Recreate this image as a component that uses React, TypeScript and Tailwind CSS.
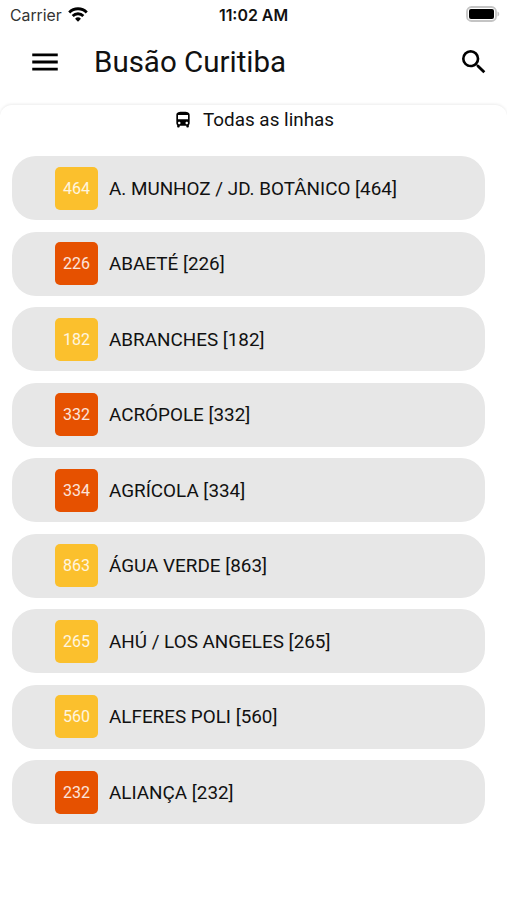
import React from 'react';

const lines = [
  { code: '464', name: 'A. MUNHOZ / JD. BOTÂNICO', express: false },
  { code: '226', name: 'ABAETÉ', express: true },
  { code: '182', name: 'ABRANCHES', express: false },
  { code: '332', name: 'ACRÓPOLE', express: true },
  { code: '334', name: 'AGRÍCOLA', express: true },
  { code: '863', name: 'ÁGUA VERDE', express: false },
  { code: '265', name: 'AHÚ / LOS ANGELES', express: false },
  { code: '560', name: 'ALFERES POLI', express: false },
  { code: '232', name: 'ALIANÇA', express: true },
];

function StatusBar() {
  return (
    <div className="grid h-[30px] grid-cols-3 items-center pr-[7px] pl-[10px] font-['Inter',sans-serif] text-[15.8px] text-[#111]">
      <div className="flex items-center gap-[6px]">
        <span className="pt-px text-[#333]">Carrier</span>
        <svg className="-mt-0.5" width="20" height="15" viewBox="0 0 21 15" fill="none" stroke="#000" strokeWidth="3">
          <path d="M1.300 5.300a13 13 0 0 1 18.400 0" />
          <path d="M4.900 9a8 8 0 0 1 11.200 0" />
          <path d="M10.500 15 7.400 11.900a4.400 4.400 0 0 1 6.200 0z" fill="#000" stroke="none" />
        </svg>
      </div>
      <span className="pt-px pr-[3px] text-center text-[15.9px] font-semibold whitespace-nowrap">11:02 AM</span>
      <svg className="-mt-[2px] justify-self-end" width="34" height="16" viewBox="0 0 34 16">
        <rect x="1" y="1" width="29" height="14" rx="4.500" fill="#fff" stroke="#c4c4c4" strokeWidth="1.800" />
        <rect x="3" y="3" width="25" height="10" rx="2" fill="#000" />
        <path d="M31.500 5.500c2.300.8 2.300 4.200 0 5z" fill="#c4c4c4" />
      </svg>
    </div>
  );
}

export default function App() {
  return (
    <div className="flex h-[900px] w-[507px] flex-col overflow-hidden bg-white font-['Roboto',sans-serif] text-[#111]">
      <StatusBar />
      <header className="flex h-[75px] shrink-0 items-center pr-[17px] pb-[12px] pl-[28px]">
        <svg width="34" height="34" viewBox="0 0 24 24"><path d="M3 18h18v-2H3v2zm0-5h18v-2H3v2zm0-7v2h18V6H3z" /></svg>
        <h1 className="ml-8 flex-1 text-[29.500px] leading-9">Busão Curitiba</h1>
        <svg width="32" height="32" viewBox="0 0 24 24"><path d="M15.500 14h-.79l-.28-.27A6.470 6.470 0 0 0 16 9.500 6.500 6.500 0 1 0 9.500 16c1.610 0 3.090-.59 4.230-1.570l.27.28v.79l5 4.990L20.490 19l-4.990-5zm-6 0C7.010 14 5 11.990 5 9.500S7.010 5 9.500 5 14 7.010 14 9.500 11.990 14 9.500 14z" /></svg>
      </header>
      <main className="flex-1 rounded-t-[12px] shadow-[0_-1px_3px_rgba(0,0,0,0.08)]">
        <div className="flex h-[51.200px] items-start justify-center gap-[10px] pt-[3px]">
          <svg className="mt-[2px]" width="20" height="20" viewBox="0 0 24 24"><path d="M4 16c0 .88.39 1.670 1 2.220V20c0 .55.45 1 1 1h1c.55 0 1-.45 1-1v-1h8v1c0 .55.45 1 1 1h1c.55 0 1-.45 1-1v-1.780c.61-.55 1-1.340 1-2.220V6c0-3.500-3.580-4-8-4s-8 .5-8 4v10zm3.500 1c-.83 0-1.500-.67-1.500-1.500S6.670 14 7.500 14s1.500.67 1.500 1.500S8.330 17 7.500 17zm9 0c-.83 0-1.500-.67-1.500-1.500s.67-1.500 1.500-1.500 1.500.67 1.500 1.500-.67 1.500-1.500 1.500zm1.500-6H6V6h12v5z" /></svg>
          <h2 className="text-[18.880px] leading-6">Todas as linhas</h2>
        </div>
        <ul className="ml-3 flex w-[473px] flex-col gap-[11.200px]">
          {lines.map((line) => (
            <li key={line.code} className="flex h-[64.300px] items-center rounded-[24px] bg-[#e7e7e7] pl-[43px]">
              <span className={`flex size-[43px] items-center justify-center rounded-[5px] pt-px text-[16px] text-white/85 ${line.express ? 'bg-[#e65100]' : 'bg-[#fbc02d]'}`}>{line.code}</span>
              <span className="ml-[11px] pt-px text-[18.880px] whitespace-nowrap">{line.name} [{line.code}]</span>
            </li>
          ))}
        </ul>
      </main>
    </div>
  );
}
